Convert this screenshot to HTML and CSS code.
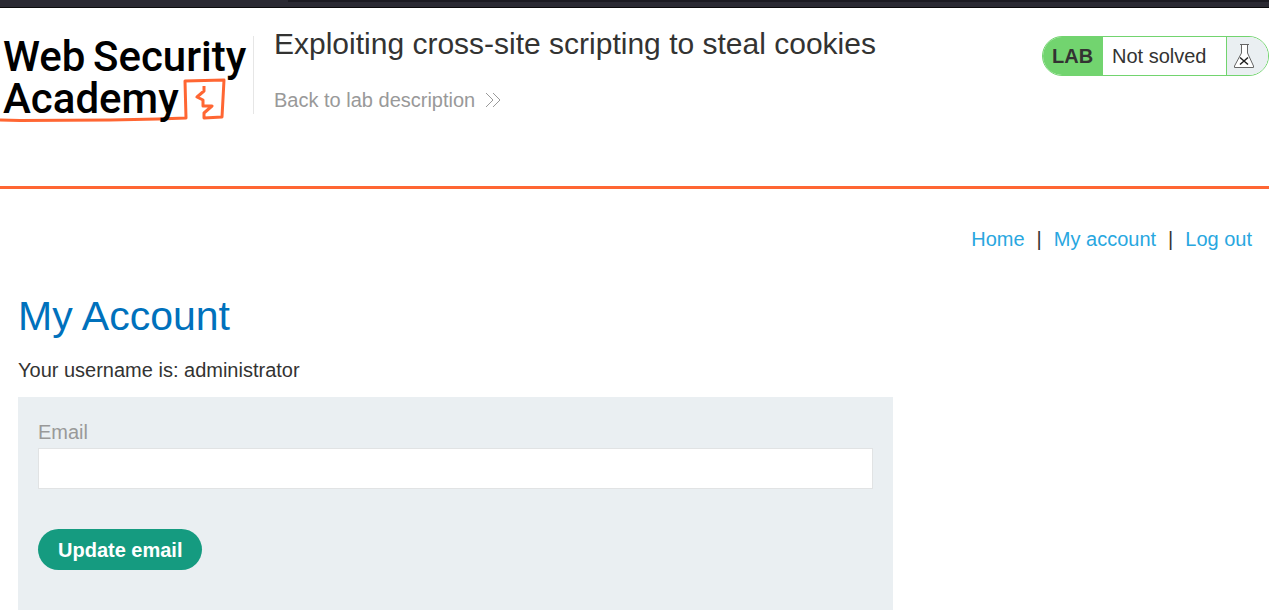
FILE: index.html
```html
<!DOCTYPE html>
<html lang="en">
<head>
<meta charset="utf-8">
<title>Exploiting cross-site scripting to steal cookies</title>
<link rel="stylesheet" href="styles.css">
</head>
<body>
<div class="toolbar-edge"><div class="toolbar-shade"></div></div>
<header class="lab-header">
  <svg class="logo" width="253" height="88" viewBox="0 0 253 88" role="img" aria-label="Web Security Academy">
    <g fill="none" stroke="#ff6633" stroke-linejoin="round">
      <path stroke-width="3" d="M0 84 L20 84.500 L110 84 L158 83 L186 82 L185 45 L224 44 L222 81 L204 82 L204 77 L212 70 L203 70 L203 64 L197 61 L204 55 L204 50"/>
    </g>
    <g class="logo-text">
      <text x="3" y="35">Web</text>
      <text x="93" y="35">Security</text>
      <text x="3" y="77">Academy</text>
    </g>
  </svg>
  <div class="title-block">
    <h2 class="lab-title">Exploiting cross-site scripting to steal cookies</h2>
    <a class="back-link" href="#">Back to lab description
      <svg width="16" height="16" viewBox="0 0 16 16" fill="none" stroke="#999" aria-hidden="true"><path d="M1 1l7 7-7 7M8 1l7 7-7 7"/></svg>
    </a>
  </div>
  <div class="lab-status">
    <span class="lab-tag">LAB</span>
    <span class="lab-state">Not solved</span>
    <span class="lab-icon">
      <svg width="22" height="26" viewBox="0 0 22 26" aria-hidden="true">
        <path d="M8.500 2v8L1.500 23v1.500h19V23L14.500 10V2z" fill="#fff"/>
        <path d="M7 1.500h9M8.500 2v8L1.500 23v1.500h19V23L14.500 10V2" fill="none" stroke="#666"/>
        <path d="M7 14.500l8 7M15 14.500l-8 7" stroke="#222" stroke-width="1.500"/>
      </svg>
    </span>
  </div>
</header>
<main class="page">
  <nav class="top-links">
    <a href="#">Home</a><span>|</span><a href="#">My account</a><span>|</span><a href="#">Log out</a>
  </nav>
  <h1 class="page-title">My Account</h1>
  <p class="username">Your username is: administrator</p>
  <form class="account-form">
    <label for="email">Email</label>
    <input id="email" type="email" name="email">
    <button type="submit">Update email</button>
  </form>
</main>
</body>
</html>
```
FILE: styles.css
```css
* { box-sizing: border-box; }
body {
  margin: 0;
  background: #fff;
  color: #333332;
  font: 20px/24px "Liberation Sans", Arial, sans-serif;
}
a { text-decoration: none; }
.toolbar-edge {
  height: 8px;
  background: #2b2a33;
  border-bottom: 1px solid #0c0c0d;
}
.toolbar-shade {
  height: 2px;
  margin-left: 288px;
  background: #1c1b22;
}
.lab-header {
  display: flex;
  align-items: flex-start;
  padding: 28px 0 62px;
  border-bottom: 3px solid #ff6633;
}
.logo { flex: none; overflow: visible; }
.logo-text {
  font: 500 42px Roboto, sans-serif;
  fill: #000;
}
.title-block {
  flex: 1;
  height: 78px;
  padding-left: 20px;
  border-left: 1px solid #e6e6e6;
}
.lab-title {
  margin: -10px 0 26px;
  font-size: 30px;
  font-weight: 400;
  line-height: 36px;
}
.back-link {
  display: flex;
  align-items: center;
  gap: 10px;
  color: #999;
}
.lab-status {
  display: flex;
  flex: none;
  height: 40px;
  border: 1px solid #72d46f;
  border-radius: 20px;
  overflow: hidden;
  line-height: 38px;
}
.lab-tag {
  width: 60px;
  padding-left: 9px;
  background: #72d46f;
  font-size: 20px;
  font-weight: 700;
}
.lab-state { width: 123px; padding-left: 9px; }
.lab-icon {
  display: flex;
  align-items: center;
  width: 42px;
  padding-left: 6px;
  background: #eaeff2;
  border-left: 1px solid #72d46f;
}
.page { padding: 38px 17px 0 18px; }
.top-links {
  display: flex;
  justify-content: flex-end;
  gap: 12px;
}
.top-links a { color: #29a7df; }
.page-title {
  margin: 42px 0 19px;
  color: #0071bc;
  font-size: 41px;
  font-weight: 400;
  line-height: 46px;
}
.username { margin: 0 0 15px; }
.account-form {
  display: flex;
  flex-direction: column;
  align-items: flex-start;
  max-width: 875px;
  padding: 23px 20px 40px;
  background: #eaeff2;
}
.account-form label { margin-bottom: 4px; color: #999; }
.account-form input {
  width: 100%;
  height: 41px;
  padding: 0 10px;
  border: 1px solid #e1e3e4;
  background: #fff;
  font: inherit;
}
.account-form button {
  height: 41px;
  margin-top: 40px;
  padding: 0 20px;
  border: 0;
  border-radius: 21px;
  background: #159b80;
  color: #fff;
  font: inherit;
  font-weight: 700;
}
```
